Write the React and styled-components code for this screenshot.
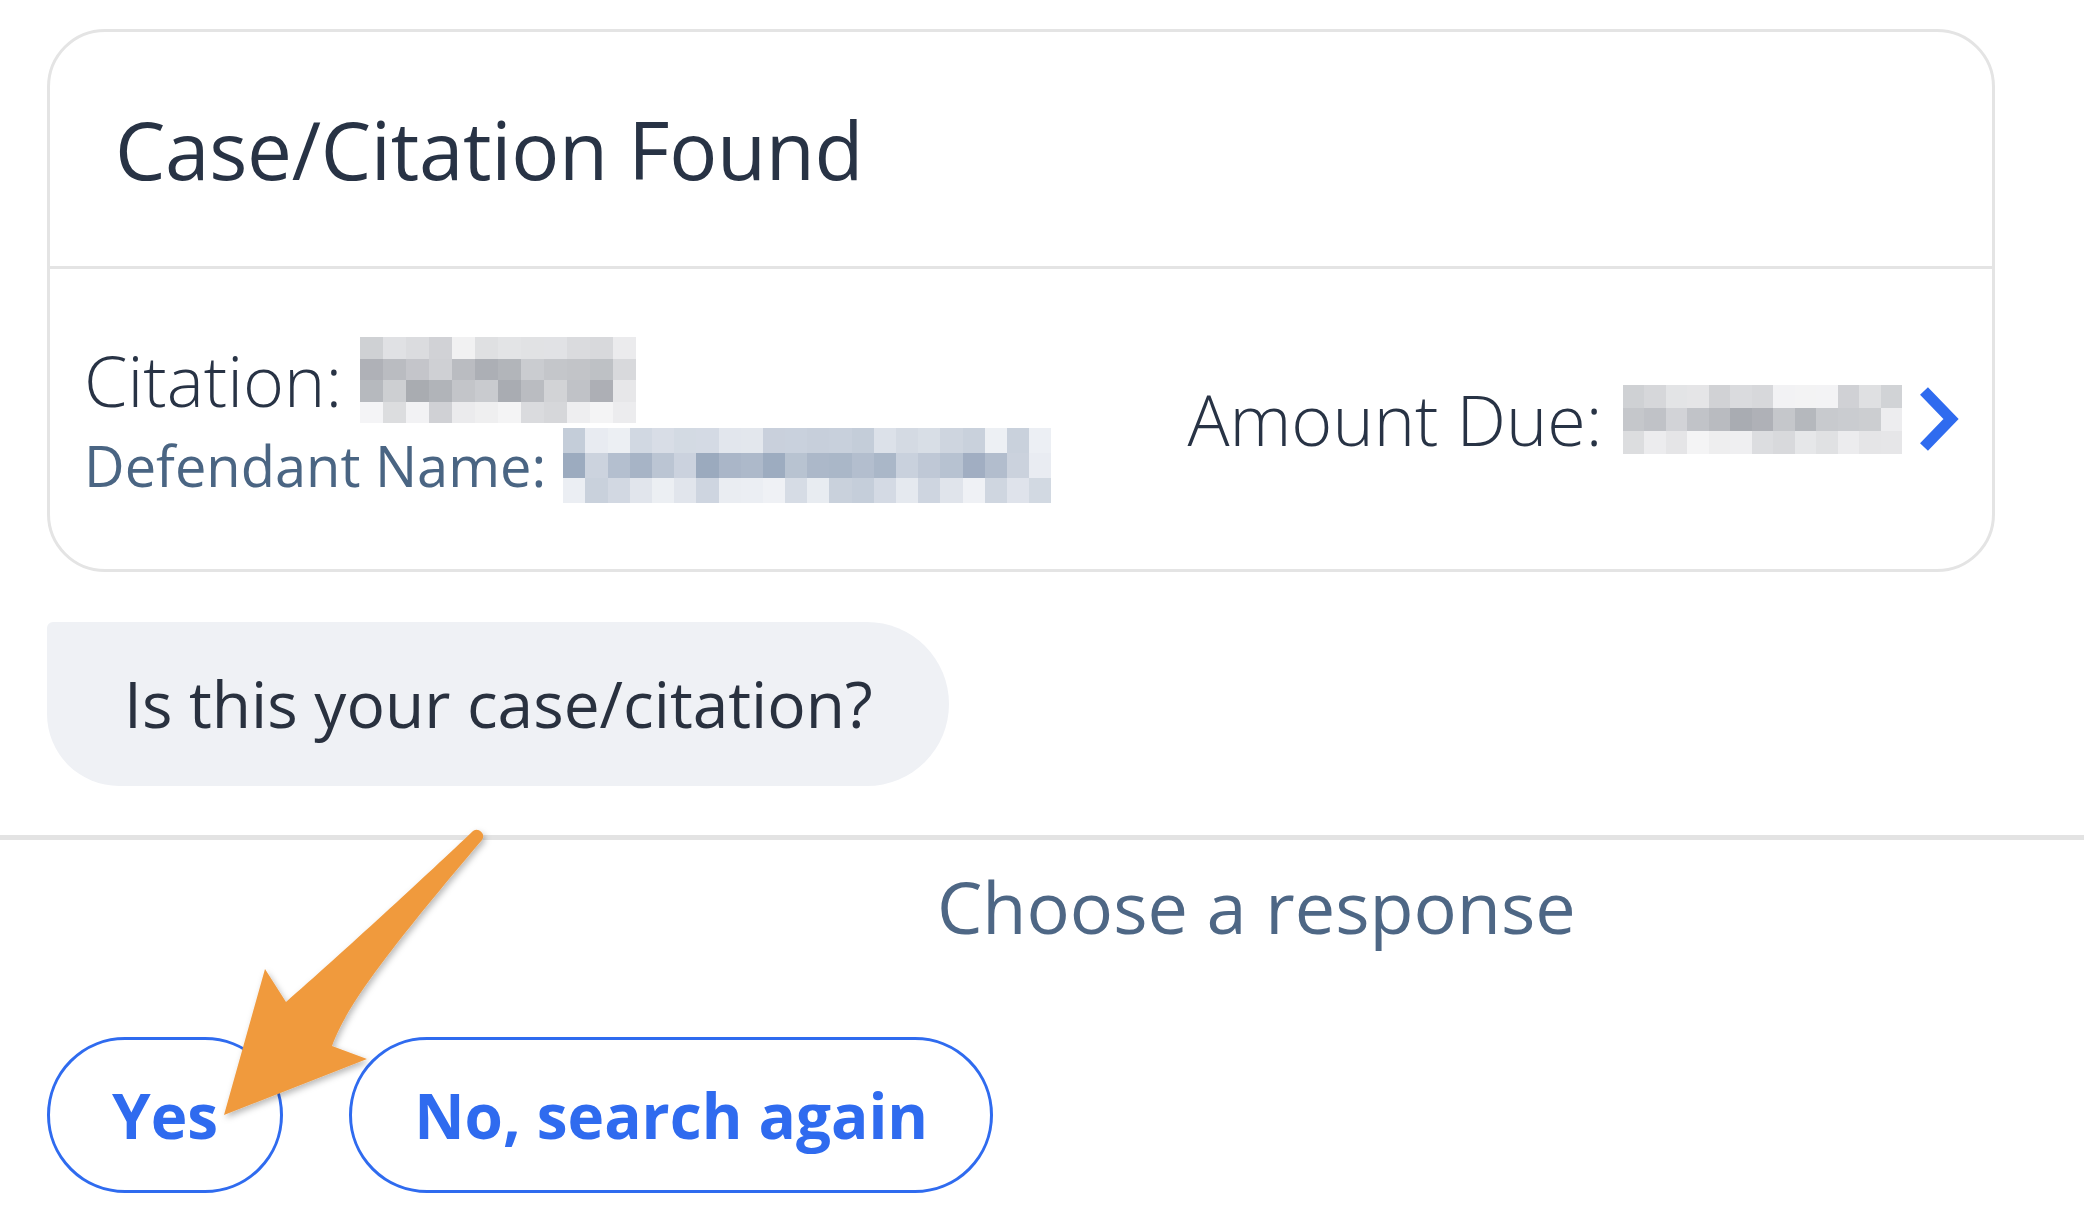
import React from "react";
import styled, { createGlobalStyle } from "styled-components";

const GlobalStyle = createGlobalStyle`
  html, body { margin: 0; padding: 0; background: #ffffff; }
  body { font-family: "Open Sans", "Noto Sans", sans-serif; }
  * { box-sizing: border-box; }
`;

const Page = styled.div`
  position: relative;
  width: 2084px;
  height: 1220px;
  overflow: hidden;
  background: #ffffff;
  font-family: "Open Sans", "Noto Sans", sans-serif;
`;

const Thread = styled.section`
  display: flex;
  flex-direction: column;
  align-items: flex-start;
  padding: 29px 89px 0 47px;
`;

const Card = styled.article`
  width: 100%;
  border: 3px solid #e4e4e4;
  border-radius: 58px;
  background: #ffffff;
  display: flex;
  flex-direction: column;
`;

const CardHeader = styled.header`
  height: 237px;
  display: flex;
  align-items: center;
  padding: 0 0 0 65px;
  border-bottom: 3px solid #e4e4e4;
`;

const Title = styled.h1`
  margin: 0;
  font-size: 80px;
  font-weight: 400;
  color: #283345;
  line-height: 1.2;
  letter-spacing: -0.3px;
`;

const CardBody = styled.div`
  height: 300px;
  display: flex;
  align-items: center;
  justify-content: space-between;
  padding: 0 32px 0 34px;
`;

const Details = styled.div`
  display: flex;
  flex-direction: column;
  gap: 4px;
  margin-top: 2px;
`;

const Field = styled.div`
  display: flex;
  align-items: center;
  gap: ${(p) => p.$gap || 18}px;
`;

const Label = styled.span`
  font-size: ${(p) => p.$size}px;
  font-weight: ${(p) => p.$weight || 400};
  color: ${(p) => p.$color || "#283345"};
  line-height: ${(p) => p.$lh}px;
  white-space: nowrap;
`;

const MosaicGrid = styled.div`
  display: grid;
  grid-template-columns: repeat(${(p) => p.$cols}, ${(p) => p.$cw}px);
  grid-auto-rows: ${(p) => p.$ch}px;
  flex: none;
`;

const Cell = styled.span`
  display: block;
`;

const Amount = styled.div`
  display: flex;
  align-items: center;
`;

const Chevron = styled.svg`
  flex: none;
  margin-left: 14px;
  display: block;
`;

const Bubble = styled.div`
  margin-top: 50px;
  height: 164px;
  display: flex;
  align-items: center;
  padding: 0 76px 0 77px;
  background: #eff1f5;
  border-radius: 6px 82px 82px 72px;
  font-size: 64px;
  color: #29313f;
  line-height: 1.2;
  white-space: nowrap;
`;

const Divider = styled.hr`
  margin: 49px 0 0;
  border: 0;
  height: 5px;
  background: #e3e3e3;
`;

const Responses = styled.section`
  display: flex;
  flex-direction: column;
  padding: 0 0 0 47px;
`;

const Prompt = styled.p`
  margin: 18px 0 0;
  padding-left: 890px;
  font-size: 72px;
  line-height: 96px;
  color: #4e6785;
  white-space: nowrap;
`;

const ButtonRow = styled.div`
  display: flex;
  gap: 66px;
  margin-top: 83px;
`;

const ReplyButton = styled.button`
  height: 156px;
  padding: 0 62px;
  border: 3px solid #2f6bef;
  border-radius: 78px;
  background: #ffffff;
  color: #2f6bef;
  font-family: "Open Sans", "Noto Sans", sans-serif;
  font-size: 62px;
  font-weight: 700;
  line-height: 1;
  display: flex;
  align-items: center;
  white-space: nowrap;
  cursor: pointer;
`;

const Overlay = styled.svg`
  position: absolute;
  left: 0;
  top: 0;
  pointer-events: none;
`;

function makeRng(seed) {
  let s = seed;
  return () => {
    s = (s * 16807) % 2147483647;
    return (s - 1) / 2147483646;
  };
}

const palettes = {
  gray: { dark: [168, 171, 177], light: [246, 246, 247] },
  blue: { dark: [152, 167, 188], light: [240, 242, 246] },
};

function Mosaic({ cols, rows, cw, ch, seed, tone = "gray" }) {
  const rng = makeRng(seed);
  const { dark, light } = palettes[tone];
  const cells = [];
  for (let r = 0; r < rows; r++) {
    for (let c = 0; c < cols; c++) {
      const edgeRow = r === 0 || r === rows - 1;
      const edgeCol = c === cols - 1;
      const t = edgeRow || edgeCol ? 0.5 + rng() * 0.5 : rng() * 0.6;
      const mix = dark.map((d, i) => Math.round(d + (light[i] - d) * t));
      cells.push(
        <Cell key={`${r}-${c}`} style={{ background: `rgb(${mix.join(",")})` }} />
      );
    }
  }
  return (
    <MosaicGrid $cols={cols} $cw={cw} $ch={ch} aria-hidden="true">
      {cells}
    </MosaicGrid>
  );
}

export default function App() {
  return (
    <Page>
      <GlobalStyle />
      <Thread>
        <Card>
          <CardHeader>
            <Title>Case/Citation Found</Title>
          </CardHeader>
          <CardBody>
            <Details>
              <Field>
                <Label $size={70} $weight={300} $lh={84}>
                  Citation:
                </Label>
                <Mosaic cols={12} rows={4} cw={23} ch={21.5} seed={11} />
              </Field>
              <Field $gap={17}>
                <Label $size={56} $color="#4a6583" $lh={76}>
                  Defendant Name:
                </Label>
                <Mosaic cols={22} rows={3} cw={22.2} ch={25} seed={29} tone="blue" />
              </Field>
            </Details>
            <Amount>
              <Field $gap={20}>
                <Label $size={70} $weight={300} $lh={84}>
                  Amount Due:
                </Label>
                <Mosaic cols={13} rows={3} cw={21.5} ch={23} seed={47} />
              </Field>
              <Chevron width="44" height="68" viewBox="0 0 44 68" aria-hidden="true">
                <path
                  d="M8 6 L35 34 L8 62"
                  fill="none"
                  stroke="#2f6bef"
                  strokeWidth="11"
                  strokeLinejoin="miter"
                />
              </Chevron>
            </Amount>
          </CardBody>
        </Card>
        <Bubble>Is this your case/citation?</Bubble>
      </Thread>
      <Divider />
      <Responses>
        <Prompt>Choose a response</Prompt>
        <ButtonRow>
          <ReplyButton type="button">Yes</ReplyButton>
          <ReplyButton type="button">No, search again</ReplyButton>
        </ButtonRow>
      </Responses>
      <Overlay width="2084" height="1220" viewBox="0 0 2084 1220" aria-hidden="true">
        <defs>
          <filter id="arrowShadow" x="-20%" y="-20%" width="140%" height="140%">
            <feDropShadow dx="2" dy="3" stdDeviation="3" floodColor="#000" floodOpacity="0.28" />
          </filter>
        </defs>
        <path
          d="M473 831 C430 872 340 955 286 1002 L265 969 L224 1115 L367 1059 L332 1046 C345 1010 380 960 482 840 A6.5 6.5 0 0 0 473 831 Z"
          fill="#f09a3e"
          filter="url(#arrowShadow)"
        />
      </Overlay>
    </Page>
  );
}
